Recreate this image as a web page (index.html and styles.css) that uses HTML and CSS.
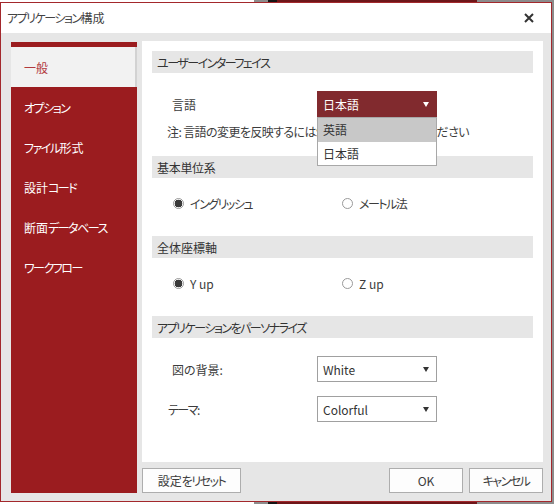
FILE: index.html
```html
<!DOCTYPE html>
<html lang="ja">
<head>
<meta charset="utf-8">
<link rel="stylesheet" href="styles.css">
</head>
<body>
<div class="dialog">
  <div class="titlebar">
    <span class="title tight">アプリケーション<span class="k">構成</span></span>
    <svg class="close" width="10" height="10" viewBox="0 0 10 10"><path d="M1 1L9 9M9 1L1 9" stroke="#333" stroke-width="2" fill="none"/></svg>
  </div>
  <div class="body">
    <div class="sidebar">
      <div class="nav-item selected">一般</div>
      <div class="nav-item tight">オプション</div>
      <div class="nav-item tight">ファイル<span class="k">形式</span></div>
      <div class="nav-item tight"><span class="k">設計</span>コード</div>
      <div class="nav-item tight"><span class="k">断面</span>データベース</div>
      <div class="nav-item tight">ワークフロー</div>
    </div>
    <div class="main">
      <div class="panel">
        <div class="section-head tight">ユーザーインターフェイス</div>
        <div class="field-row first">
          <span class="label">言語</span>
          <div class="select-wrap">
            <div class="select red"><span>日本語</span><span class="arrow white"></span></div>
            <div class="dropdown-list">
              <div class="option hover">英語</div>
              <div class="option">日本語</div>
            </div>
          </div>
        </div>
        <div class="note">注: 言語の変更を反映するには<span class="hidden-part">SkyCiv を再起動して</span>ください</div>

        <div class="section-head gap">基本単位系</div>
        <div class="radio-row">
          <span class="radio checked tight">イングリッシュ</span>
          <span class="radio tight">メートル<span class="k">法</span></span>
        </div>

        <div class="section-head gap2">全体座標軸</div>
        <div class="radio-row">
          <span class="radio checked">Y up</span>
          <span class="radio">Z up</span>
        </div>

        <div class="section-head gap2 tight">アプリケーションをパーソナライズ</div>
        <div class="field-row first">
          <span class="label">図の背景:</span>
          <div class="select"><span>White</span><span class="arrow"></span></div>
        </div>
        <div class="field-row second">
          <span class="label tight shift">テーマ:</span>
          <div class="select"><span>Colorful</span><span class="arrow"></span></div>
        </div>
      </div>
      <div class="footer">
        <button class="btn reset tight"><span class="k">設定</span>をリセット</button>
        <span class="spacer"></span>
        <button class="btn">OK</button>
        <button class="btn tight">キャンセル</button>
      </div>
    </div>
  </div>
</div>
</body>
</html>
```
FILE: styles.css
```css
html, body {
  margin: 0;
  padding: 0;
}
body {
  width: 554px;
  height: 504px;
  overflow: hidden;
  background: linear-gradient(to right, #ffffff 0 254px, #8c8c8c 254px 268px, #141414 268px 277px, #6e1619 277px 477px, #8c8c8c 477px);
  font-family: "Noto Sans CJK JP", "Noto Sans", sans-serif;
  font-feature-settings: "palt";
  font-size: 12px;
  color: #3c3c3c;
}
.tight {
  letter-spacing: -1.5px;
}
.k {
  letter-spacing: 0;
}
.dialog {
  margin-top: 2px;
  width: 552px;
  height: 500px;
  box-sizing: border-box;
  border: 1px solid #a3282c;
  background: #e6e6e6;
  display: flex;
  flex-direction: column;
}
.titlebar {
  height: 30px;
  flex: none;
  background: #ffffff;
  display: flex;
  align-items: center;
  padding: 0 17px 0 6px;
}
.title {
  flex: 1;
  color: #444;
  font-size: 12px;
  line-height: 16px;
}
.close {
  display: block;
}
.body {
  flex: 1;
  display: flex;
  padding: 8px 7px 8px 10px;
  gap: 5px;
  min-height: 0;
}
.sidebar {
  width: 126px;
  flex: none;
  margin-top: 1px;
  background: #9b1c1f;
  padding-top: 5px;
  box-sizing: border-box;
}
.nav-item {
  height: 40px;
  display: flex;
  align-items: center;
  padding-left: 13px;
  color: #ffffff;
  font-size: 12px;
}
.nav-item.selected {
  background: #f2f2f2;
  color: #b23a3e;
  box-shadow: inset -2px 0 0 #d2d2d2;
}
.main {
  width: 401px;
  flex: none;
  display: flex;
  flex-direction: column;
  gap: 6px;
}
.panel {
  flex: 1;
  background: #ffffff;
  padding: 10px;
}
.section-head {
  height: 22px;
  background: #e6e6e6;
  display: flex;
  align-items: center;
  padding-left: 5px;
  color: #333;
  font-size: 12px;
}
.section-head.gap { margin-top: 16px; letter-spacing: -0.3px; }
.section-head.gap2 { margin-top: 25px; }
.field-row {
  display: flex;
  align-items: center;
  height: 26px;
  padding-left: 20px;
}
.field-row.first { margin-top: 18px; }
.field-row.second { margin-top: 14px; }
.label {
  width: 145px;
  flex: none;
  color: #3c3c3c;
}
.label.shift {
  margin-left: -4px;
  width: 149px;
}
.select-wrap {
  position: relative;
}
.select {
  width: 120px;
  height: 26px;
  box-sizing: border-box;
  border: 1px solid #a0a0a0;
  background: #fff;
  display: flex;
  align-items: center;
  justify-content: space-between;
  padding: 0 7px 0 5px;
  color: #333;
}
.select.red {
  background: #812a2e;
  border-color: #812a2e;
  color: #fff;
}
.arrow {
  width: 0;
  height: 0;
  border-left: 3.5px solid transparent;
  border-right: 3.5px solid transparent;
  border-top: 5px solid #333;
}
.arrow.white {
  border-top-color: #fff;
}
.dropdown-list {
  position: absolute;
  left: 0;
  top: 26px;
  width: 120px;
  box-sizing: border-box;
  border: 1px solid #a8a8a8;
  background: #fff;
  z-index: 2;
}
.option {
  height: 23.5px;
  display: flex;
  align-items: center;
  padding-left: 5px;
  color: #333;
}
.option.hover {
  background: #c8c8c8;
}
.note {
  margin-top: 7px;
  padding-left: 15px;
  line-height: 16px;
  white-space: nowrap;
  color: #3c3c3c;
  letter-spacing: -0.6px;
}
.hidden-part {
  letter-spacing: 0.4px;
}
.radio-row {
  margin-top: 17px;
  height: 16px;
  display: flex;
  align-items: center;
  padding-left: 21px;
}
.radio {
  width: 169px;
  display: flex;
  align-items: center;
  color: #3c3c3c;
}
.radio::before {
  content: "";
  width: 11px;
  height: 11px;
  box-sizing: border-box;
  border: 1px solid #9a9a9a;
  border-radius: 50%;
  background: #fff;
  flex: none;
  margin-right: 6px;
}
.radio.checked::before {
  background: radial-gradient(circle, #3a3a3a 0 3.7px, #fff 4.1px);
}
.footer {
  height: 25px;
  flex: none;
  display: flex;
  gap: 6px;
}
.spacer { flex: 1; }
.btn {
  width: 74px;
  height: 25px;
  box-sizing: border-box;
  border: 1px solid #adadad;
  background: #fdfdfd;
  font-family: inherit;
  font-feature-settings: "palt";
  font-size: 12px;
  color: #3c3c3c;
  padding: 0;
}
.btn.reset {
  width: 99px;
}
```
